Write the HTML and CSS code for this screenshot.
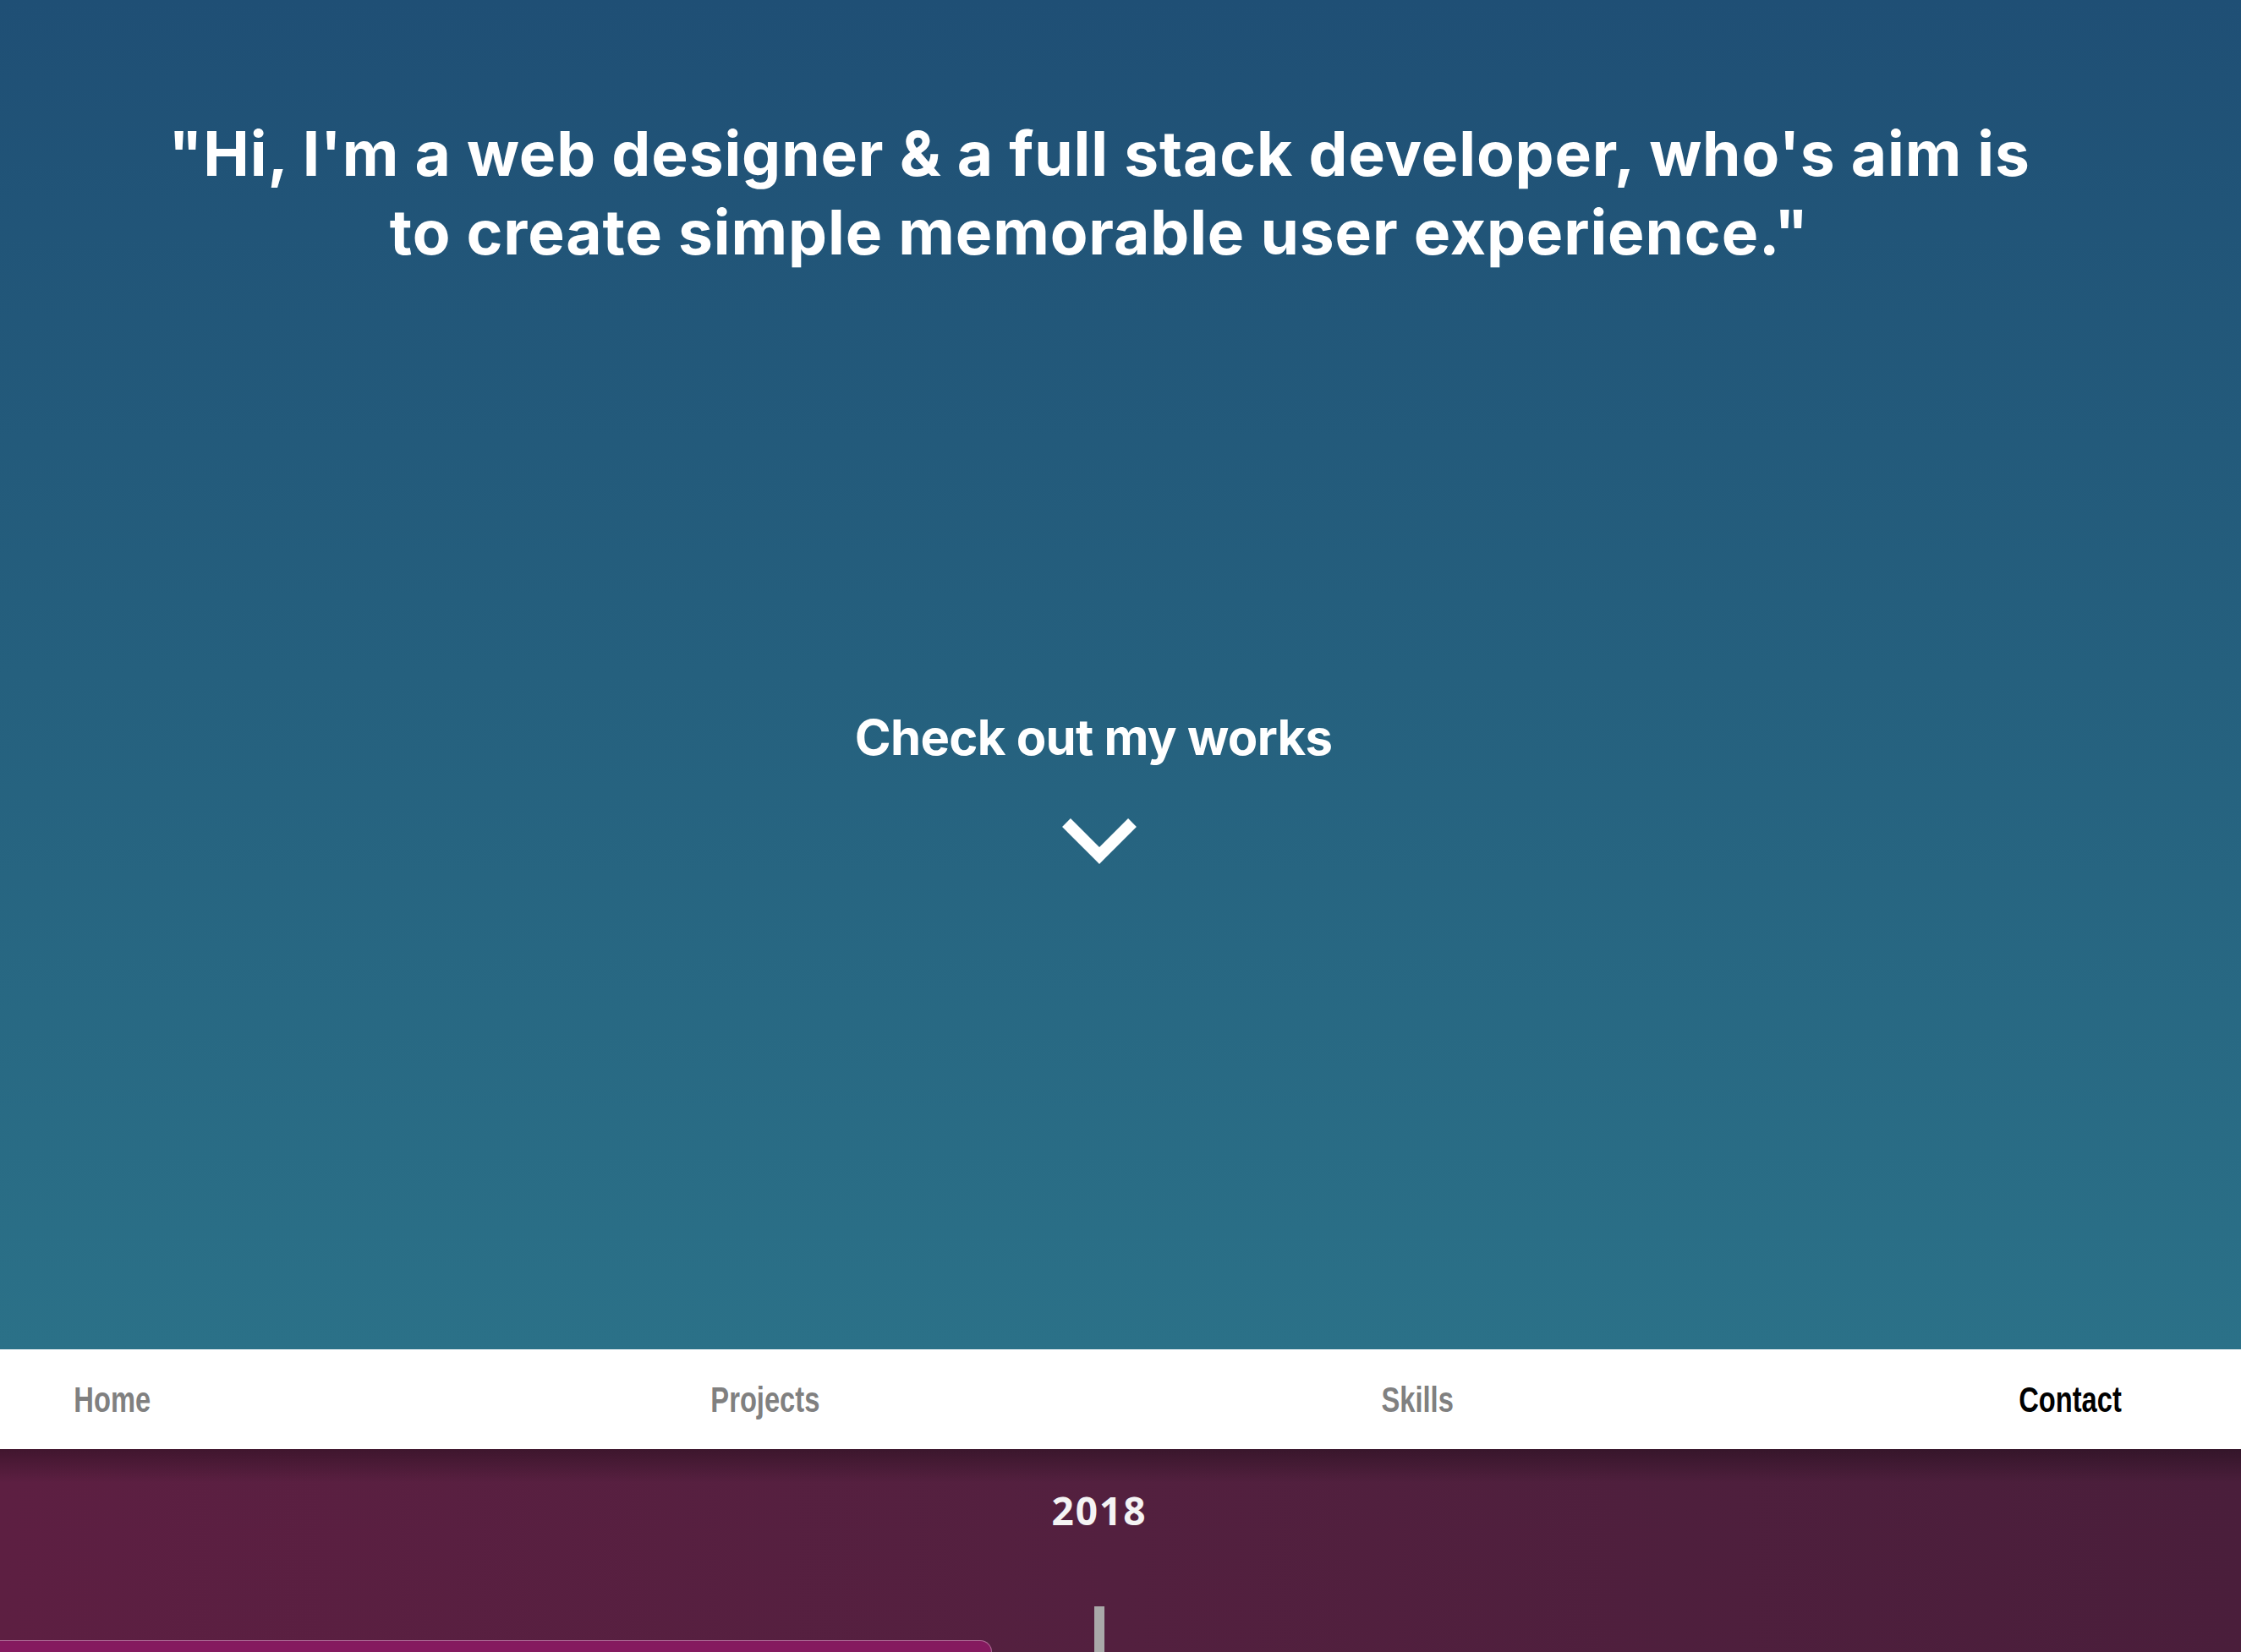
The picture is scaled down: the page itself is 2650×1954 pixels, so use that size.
FILE: index.html
```html
<!DOCTYPE html>
<html lang="en">
<head>
<meta charset="utf-8">
<title>Portfolio</title>
<link rel="stylesheet" href="styles.css">
</head>
<body>
<header class="hero">
  <div class="hero-inner">
    <h1 class="tagline">"Hi, I'm a web designer &amp; a full stack developer, who's aim is<br>to create simple memorable user experience."</h1>
    <div class="cta">
      <p class="cta-text">Check out my works</p>
      <svg class="chevron" viewBox="0 0 90 56" width="90" height="56" aria-hidden="true">
        <polyline points="6,6 45,45 84,6" fill="none" stroke="#ffffff" stroke-width="14" stroke-linecap="butt" stroke-linejoin="miter"/>
      </svg>
    </div>
  </div>
</header>
<nav class="nav">
  <a class="nav-link" href="#home"><span class="nav-label">Home</span></a>
  <a class="nav-link" href="#projects"><span class="nav-label">Projects</span></a>
  <a class="nav-link" href="#skills"><span class="nav-label">Skills</span></a>
  <a class="nav-link active" href="#contact"><span class="nav-label">Contact</span></a>
</nav>
<section class="timeline">
  <div class="timeline-inner">
    <div class="year">2018</div>
    <div class="track">
      <div class="card"></div>
      <div class="line"></div>
    </div>
  </div>
</section>
</body>
</html>
```
FILE: styles.css
```css
* { box-sizing: border-box; }
html, body { margin: 0; padding: 0; }
body {
  font-family: "Inter", "Liberation Sans", sans-serif;
  background: #55203f;
  overflow: hidden;
}

.hero {
  height: 1596px;
  background: linear-gradient(to bottom, #1f4f75 0%, #25607e 50%, #2b7188 100%);
  color: #ffffff;
}
.hero-inner {
  width: 2600px;
  display: flex;
  flex-direction: column;
  align-items: center;
  padding-top: 135px;
}
.tagline {
  margin: 0;
  font-size: 73px;
  line-height: 93px;
  font-weight: 700;
  text-align: center;
  letter-spacing: 0.9px;
}
.cta {
  display: flex;
  flex-direction: column;
  align-items: center;
  margin-top: 516px;
}
.cta-text {
  margin: 0;
  padding-right: 14px;
  font-size: 58px;
  line-height: 70px;
  font-weight: 700;
  letter-spacing: -0.7px;
}
.chevron {
  display: block;
  margin-top: 60px;
}

.nav {
  height: 118px;
  background: #ffffff;
  display: flex;
  justify-content: space-between;
  align-items: center;
  padding: 0 112px 0 43px;
}
.nav-link {
  width: 180px;
  display: flex;
  justify-content: center;
  font-family: "Liberation Sans", "Arial", sans-serif;
  font-weight: 700;
  font-size: 43px;
  line-height: 50px;
  color: #808080;
  text-decoration: none;
}
.nav-label {
  display: inline-block;
  white-space: nowrap;
  transform: scaleX(0.76);
}
.nav-link.active { color: #000000; }

.timeline {
  height: 800px;
  background:
    linear-gradient(to bottom, rgba(0,0,0,0.3) 0px, rgba(0,0,0,0) 40px),
    linear-gradient(to right, #5d1f42 0%, #53203f 50%, #4a1e3b 100%);
}
.timeline-inner {
  width: 2600px;
  display: flex;
  flex-direction: column;
  align-items: center;
  padding-top: 40px;
}
.year {
  font-family: "Open Sans", "Noto Sans", sans-serif;
  font-weight: 700;
  font-size: 46px;
  line-height: 64px;
  letter-spacing: 2px;
  color: #f4f4f4;
}
.track {
  position: relative;
  width: 100%;
  margin-top: 82px;
  height: 600px;
  display: flex;
  justify-content: center;
}
.line {
  width: 12px;
  height: 100%;
  background: #a9a9a9;
}
.card {
  position: absolute;
  left: 0;
  top: 40px;
  width: 1173px;
  height: 400px;
  background: #851a5f;
  border-top-right-radius: 14px;
  border-top: 1px solid rgba(255,255,255,0.35);
  border-right: 1px solid rgba(255,255,255,0.35);
}
```
